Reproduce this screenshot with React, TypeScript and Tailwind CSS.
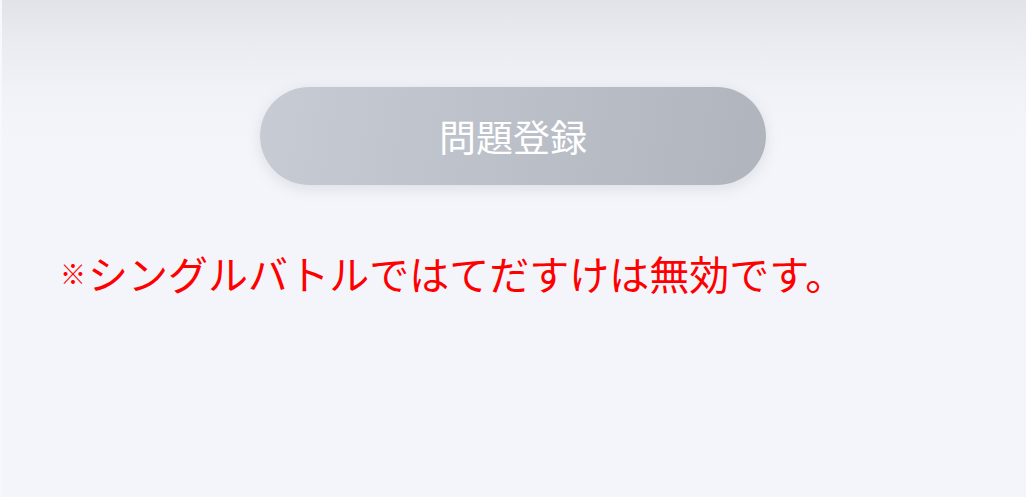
export default function App() {
  return (
    <div
      className="min-h-[497px] w-full bg-[linear-gradient(to_bottom,#e2e3e8_0px,#eaebf0_40px,#f1f2f7_90px,#f4f5fa_140px,#f4f5fa_497px)] border-l-2 border-[#f8f8fc]"
      style={{ fontFamily: '"Noto Sans CJK JP", "Noto Sans", sans-serif' }}
    >
      <div className="flex flex-col pt-[87px]">
        <div className="flex justify-center pr-[2px]">
          <button
            type="button"
            disabled
            className="flex h-[98px] w-[506px] items-center justify-center rounded-full bg-[linear-gradient(100deg,#c7cbd3,#b0b4bd)] text-[37px] leading-none text-white shadow-[0_4px_14px_rgba(120,125,140,0.18)]"
          >
            問題登録
          </button>
        </div>
        <p className="mt-[60px] pl-[58px] text-[40px] leading-[56px] text-[#ff0000]">
          <span className="mr-[2px] inline-block align-[6px] text-[26px] leading-none font-bold">※</span>シングルバトルではてだすけは無効です。
        </p>
      </div>
    </div>
  )
}
